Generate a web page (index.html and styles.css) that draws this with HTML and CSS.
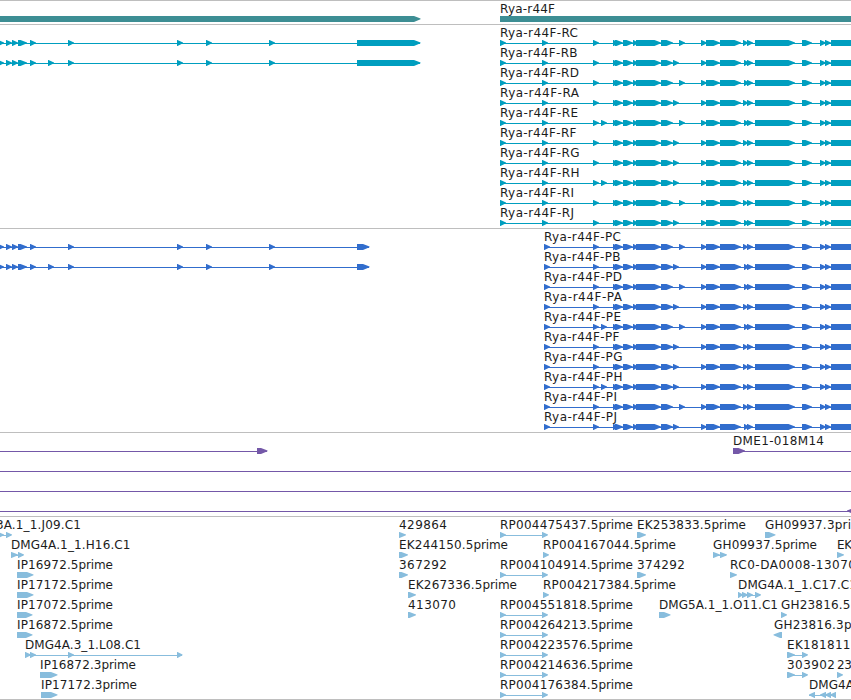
FILE: index.html
```html
<!DOCTYPE html>
<html lang="en">
<head>
<meta charset="utf-8">
<title>Genome browser</title>
<link rel="stylesheet" href="styles.css">
</head>
<body>
<main class="browser">
  <section class="track gene" id="gene"></section>
  <section class="track transcript" id="transcript"></section>
  <section class="track protein" id="protein"></section>
  <section class="track bac" id="bac"></section>
  <section class="track est" id="est"></section>
</main>
<script src="tracks.js"></script>
</body>
</html>
```
FILE: styles.css
```css
body {
  margin: 0;
  background: #fff;
}

.browser {
  display: flex;
  flex-direction: column;
  width: 851px;
  height: 700px;
  overflow: hidden;
}

.track {
  display: flex;
  flex-direction: column;
  flex: none;
  border-top: 1px solid #bebebe;
  padding-bottom: 3px;
}

.row {
  display: block;
  width: 851px;
  height: 20px;
  overflow: visible;
}

.row text {
  fill: #1c1c1c;
  font: 12px "DejaVu Sans", sans-serif;
}

.row line {
  stroke: currentColor;
  stroke-width: 1;
  shape-rendering: crispEdges;
}

.row polygon {
  fill: currentColor;
}

.gene { color: #3d8e94; }
.transcript { color: #009ebf; }
.protein { color: #316dcd; }
.bac { color: #7458a8; }

.est {
  color: #88bddd;
  padding-bottom: 2px;
  border-bottom: 1px solid #bebebe;
}
```
FILE: tracks.js
```js
// A feature is { label, width, blocks: [[start, end], ...], from, to, reverse }.
const NS = "http://www.w3.org/2000/svg";
const SUFFIX = "prime";
const SUFFIX_WIDTH = 34.5;

function add(parent, name, attrs) {
  const el = document.createElementNS(NS, name);
  for (const key in attrs) el.setAttribute(key, attrs[key]);
  parent.appendChild(el);
  return el;
}

function feature(label, width, blocks, extra) {
  return Object.assign({ label, width, blocks }, extra);
}

// The digits of a clone name are set wider than its "prime" suffix.
function drawLabel(svg, label, x, width) {
  const text = add(svg, "text", { x, y: 12 });
  if (label.endsWith(SUFFIX)) {
    const head = width - SUFFIX_WIDTH;
    add(text, "tspan", { textLength: head }).textContent = label.slice(0, -SUFFIX.length);
    add(text, "tspan", { x: x + head, textLength: SUFFIX_WIDTH }).textContent = SUFFIX;
  } else {
    text.setAttribute("textLength", width);
    text.textContent = label;
  }
}

function drawRow(track, features) {
  const svg = add(document.getElementById(track), "svg", { class: "row", viewBox: "0 0 851 20" });
  for (const f of features) {
    const first = f.blocks[0], last = f.blocks[f.blocks.length - 1];
    const from = f.from ?? first[0], to = f.to ?? last[1] - 1;
    if (f.blocks.length !== 1 || f.from !== undefined || f.to !== undefined) {
      add(svg, "line", { x1: from, x2: to, y1: 18.5, y2: 18.5 });
    }
    for (const [a, b] of f.blocks) {
      const tip = Math.min(b - a - 0.5, 6.5);
      const points = f.reverse
        ? [[b, 15], [a + tip, 15], [a, 17.5], [a, 18.3], [a + tip, 21], [b, 21]]
        : [[a, 15], [b - tip, 15], [b, 17.5], [b, 18.3], [b - tip, 21], [a, 21]];
      add(svg, "polygon", { points: points.map(p => p.join(",")).join(" ") });
    }
    if (f.label) drawLabel(svg, f.label, f.x ?? first[0], f.width);
  }
}

drawRow("gene", [
  feature("", 0, [[-10, 420.5]]),
  feature("Rya-r44F", 55, [[500, 870]])
]);

// Isoform, label width, start of the optional exon, start of the paired exon.
const isoforms = [
  ["C", 78, 679, 743], ["B", 77.5, 673, 744], ["D", 79, 679, 744], ["A", 79, 673, 743],
  ["E", 78, 679, 744], ["F", 76.5, 673, 743], ["G", 79.5, 673, 743], ["H", 79.5, 673, 743],
  ["I", 74, 679, 743], ["J", 74, 673, 744]
];

function exons(name, optional, paired) {
  const list = [[542, 548], [593, 599]];
  if (name === "E" || name === "H") list.push([601, 607]);
  return list.concat([
    [613, 619], [615, 623], [623, 633], [633, 638], [636, 661], [661, 673],
    [optional, optional + 6], [701, 707], [706, 720], [720, 741],
    [paired, paired + 5], [747, 753], [755, 795], [802, 812],
    [820, 826], [825, 831], [831, 870]
  ]);
}

function leftExons(index, lastEnd) {
  const list = [[-2, 4], [6, 12], [12, 18], [18, 27], [30, 36]];
  if (index === 1) list.push([48, 54]);
  return list.concat([[68, 74], [177, 183], [206, 212], [269, 275], [357, lastEnd]]);
}

isoforms.forEach(([name, width, optional, paired], i) => {
  const left = end => i < 2 ? [feature("", 0, leftExons(i, end))] : [];
  const blocks = exons(name, optional, paired);
  drawRow("transcript", left(420.5).concat(
    feature("Rya-r44F-R" + name, width, [[500, 506]].concat(blocks))
  ));
  drawRow("protein", left(369.5).concat(
    feature("Rya-r44F-P" + name, width - 1, [[544, 550]].concat(blocks.slice(1)))
  ));
});

drawRow("bac", [
  feature("", 0, [[257, 267.5]], { from: 0 }),
  feature("DME1-018M14", 91, [[733, 745]], { to: 851 })
]);
drawRow("bac", [feature("", 0, [[-20, -10]], { to: 851 })]);
drawRow("bac", [feature("", 0, [[-20, -10]], { to: 851 })]);
drawRow("bac", [feature("", 0, [[847, 860]], { from: 0, reverse: true })]);

const spanned = id => feature("RP" + id + ".5prime", 133, [[500, 506], [542, 548]]);
const single = id => feature("RP" + id + ".5prime", 133, [[543, 549]]);

const est = [
  [
    feature("DMG3A.1_1.J09.C1", 114.5, [[-2, 4], [6, 12]], { x: -33.5 }),
    feature("429864", 48, [[399, 406]]),
    spanned("004475437"),
    feature("EK253833.5prime", 109, [[637, 646]]),
    feature("GH09937.3pri", 86, [[765, 775.5]])
  ],
  [
    feature("DMG4A.1_1.H16.C1", 119.5, [[11, 18], [18, 24]]),
    feature("EK244150.5prime", 109, [[399, 408]]),
    single("004167044"),
    feature("GH09937.5prime", 104, [[713, 720], [720, 727]]),
    feature("EK", 15, [[837, 844]])
  ],
  [
    feature("IP16972.5prime", 96, [[17, 33.5]]),
    feature("367292", 48, [[399, 408]]),
    spanned("004104914"),
    feature("374292", 48, [[637, 646]]),
    feature("RC0-DA0008-13070", 126, [[730, 737]])
  ],
  [
    feature("IP17172.5prime", 96, [[17, 33.5]]),
    feature("EK267336.5prime", 109, [[408, 416]]),
    single("004217384"),
    feature("DMG4A.1_1.C17.C1", 119, [[738, 743], [742, 748], [747, 753], [755, 761]])
  ],
  [
    feature("IP17072.5prime", 96, [[17, 32.5]]),
    feature("413070", 48, [[408, 416]]),
    spanned("004551818"),
    feature("DMG5A.1_1.O11.C1", 119, [[659, 670.5]]),
    feature("GH23816.5", 69.5, [[781, 787]])
  ],
  [
    feature("IP16872.5prime", 96, [[17, 32.5]]),
    spanned("004264213"),
    feature("GH23816.3p", 77.5, [[773.5, 782]], { x: 774, reverse: true })
  ],
  [
    feature("DMG4A.3_1.L08.C1", 116, [[25, 31], [30, 36], [68, 74], [177, 182.5]]),
    spanned("004223576"),
    feature("EK181811", 63.5, [[787, 795], [802, 808]])
  ],
  [
    feature("IP16872.3prime", 96, [[40, 57.5]]),
    spanned("004214636"),
    feature("303902", 48, [[787, 795], [802, 808]]),
    feature("23", 15, [[837, 843]])
  ],
  [
    feature("IP17172.3prime", 96, [[41, 57.5]]),
    spanned("004176384"),
    feature("DMG4A", 45, [[809, 815], [820, 826], [825, 831], [830, 836]], { reverse: true })
  ]
];
est.forEach(row => drawRow("est", row));
```
